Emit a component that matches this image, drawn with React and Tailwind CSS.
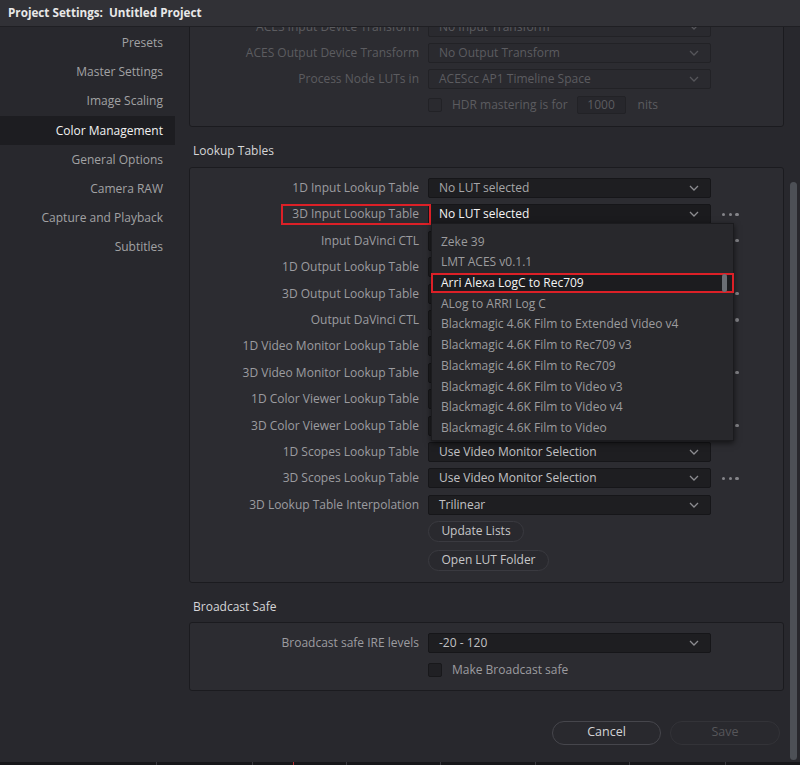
import React from "react";

const Chevron = ({ color = "#8c8c90" }) => (
  <svg width="10" height="6" viewBox="0 0 10 6" className="shrink-0">
    <path d="M1 1 L5 5 L9 1" fill="none" stroke={color} strokeWidth="1.3" />
  </svg>
);

const Dots = () => (
  <div className="flex items-center gap-[3.4px] ml-[11px]">
    <span className="w-[3.3px] h-[3.3px] rounded-full bg-[#85858a]" />
    <span className="w-[3.3px] h-[3.3px] rounded-full bg-[#85858a]" />
    <span className="w-[3.3px] h-[3.3px] rounded-full bg-[#85858a]" />
  </div>
);

const lutRows = [
  { label: "1D Input Lookup Table", value: "No LUT selected", color: "#a6a6a8" },
  { label: "3D Input Lookup Table", value: "No LUT selected", color: "#f4f4f4", dots: true, active: true },
  { label: "Input DaVinci CTL", value: "No CTL selected", dots: true },
  { label: "1D Output Lookup Table", value: "No LUT selected" },
  { label: "3D Output Lookup Table", value: "No LUT selected", dots: true },
  { label: "Output DaVinci CTL", value: "No CTL selected", dots: true },
  { label: "1D Video Monitor Lookup Table", value: "No LUT selected" },
  { label: "3D Video Monitor Lookup Table", value: "No LUT selected", dots: true },
  { label: "1D Color Viewer Lookup Table", value: "No LUT selected" },
  { label: "3D Color Viewer Lookup Table", value: "No LUT selected", dots: true },
  { label: "1D Scopes Lookup Table", value: "Use Video Monitor Selection" },
  { label: "3D Scopes Lookup Table", value: "Use Video Monitor Selection", dots: true },
  { label: "3D Lookup Table Interpolation", value: "Trilinear" },
];

const popupItems = [
  "Zeke 39",
  "LMT ACES v0.1.1",
  "Arri Alexa LogC to Rec709",
  "ALog to ARRI Log C",
  "Blackmagic 4.6K Film to Extended Video v4",
  "Blackmagic 4.6K Film to Rec709 v3",
  "Blackmagic 4.6K Film to Rec709",
  "Blackmagic 4.6K Film to Video v3",
  "Blackmagic 4.6K Film to Video v4",
  "Blackmagic 4.6K Film to Video",
];

const sideItems = [
  "Presets",
  "Master Settings",
  "Image Scaling",
  "Color Management",
  "General Options",
  "Camera RAW",
  "Capture and Playback",
  "Subtitles",
];

function Popup() {
  return (
    <div className="absolute left-[2px] top-[18px] w-[303px] h-[218px] bg-[#28282c] border border-[#1b1b1e] shadow-[0_2px_6px_rgba(0,0,0,0.6)] z-10 pt-[7px]">
      {popupItems.map((t, i) =>
        i === 2 ? (
          <div
            key={t}
            className="h-[20.7px] -mx-[1px] flex items-center pl-[8px] bg-[#1c1c1f] border-2 border-[#dc2027] text-[#f4f4f4]"
          >
            {t}
          </div>
        ) : (
          <div key={t} className="h-[20.7px] flex items-center pl-[9px] text-[#9c9c9e]">
            {t}
          </div>
        )
      )}
      <div className="absolute right-[6px] top-[50px] w-[5px] h-[18px] rounded-full bg-[#6b6e74]" />
    </div>
  );
}

function Dropdown({ value, color = "#c2c2c4", active, bg = "#1e1e21", border = "#161619", chevron }) {
  return (
    <div
      className="relative w-[283px] h-[20px] rounded-[2px] border flex items-center justify-between pl-[10px] pr-[11px] shrink-0"
      style={{ background: bg, borderColor: border }}
    >
      <span style={{ color }}>{value}</span>
      <Chevron color={chevron} />
      {active && <Popup />}
    </div>
  );
}

export default function App() {
  return (
    <div className="w-[800px] h-[765px] bg-[#28282d] flex flex-col overflow-hidden font-['Open_Sans',sans-serif] text-[12px] leading-none">
      {/* Title bar */}
      <div className="h-[27px] shrink-0 bg-[#313136] border-b border-[#1f1f23] flex items-center pl-[8px] z-20 relative">
        <span className="whitespace-pre font-bold text-[11.7px] text-[#e8e8e8]">
          {"Project Settings:  Untitled Project"}
        </span>
      </div>

      <div className="flex flex-1 min-h-0">
        {/* Sidebar */}
        <div className="w-[175px] shrink-0 flex flex-col pt-[1.5px]">
          {sideItems.map((s) => (
            <div
              key={s}
              className={
                "h-[29.2px] flex items-center justify-end pr-[12px] " +
                (s === "Color Management" ? "bg-[#1d1d21] text-[#f2f2f2]" : "text-[#a2a2a4]")
              }
            >
              {s}
            </div>
          ))}
        </div>

        {/* Main */}
        <div className="flex-1 min-w-0 flex overflow-hidden">
          <div className="w-[595px] ml-[14px] shrink-0 flex flex-col">
            {/* ACES panel (scrolled, partially hidden) */}
            <div className="-mt-[22px] bg-[#2c2c31] border border-[#1b1b1f] rounded-[3px] pt-[11px] pb-[11px] flex flex-col gap-[6px]">
              {[
                ["ACES Input Device Transform", "No Input Transform"],
                ["ACES Output Device Transform", "No Output Transform"],
                ["Process Node LUTs in", "ACEScc AP1 Timeline Space"],
              ].map(([l, v]) => (
                <div key={l} className="h-[20px] flex items-center">
                  <div className="w-[229px] text-right text-[#5c5c60]">{l}</div>
                  <div className="ml-[9px]">
                    <Dropdown value={v} color="#5c5c60" bg="#2a2a2f" border="#222226" chevron="#55555a" />
                  </div>
                </div>
              ))}
              <div className="h-[20px] flex items-center">
                <div className="w-[229px]" />
                <div className="ml-[9px] w-[14px] h-[14px] rounded-[2px] bg-[#2a2a2f] border border-[#222226]" />
                <span className="ml-[10px] text-[#5c5c60]">HDR mastering is for</span>
                <div className="ml-[9px] w-[49px] h-[18px] rounded-[2px] bg-[#27272c] border border-[#222226] flex items-center justify-center text-[#5c5c60]">
                  1000
                </div>
                <span className="ml-[12px] text-[#5c5c60]">nits</span>
              </div>
            </div>

            {/* Lookup Tables */}
            <div className="mt-[14px] h-[20px] flex items-center pl-[4px] text-[12px] text-[#d6d6d8]">Lookup Tables</div>
            <div className="mt-[6px] bg-[#2c2c31] border border-[#1b1b1f] rounded-[3px] pt-[10px] pb-[11px] flex flex-col">
              <div className="flex flex-col gap-[6.4px]">
                {lutRows.map((r) => (
                  <div key={r.label} className={"relative h-[20px] flex items-center" + (r.active ? " z-10" : "")}>
                    <div className="w-[229px] text-right text-[#9c9ca0]">{r.label}</div>
                    <div className="ml-[9px]">
                      <Dropdown
                        value={r.value}
                        color={r.color}
                        active={r.active}
                        bg={r.active ? "#1b1b1e" : "#1e1e21"}
                      />
                    </div>
                    {r.dots && <Dots />}
                    {r.active && (
                      <div className="absolute left-[91px] top-0 w-[150px] h-[21px] border-2 border-[#dc2027] pointer-events-none" />
                    )}
                  </div>
                ))}
              </div>
              <div className="pl-[238px] mt-[6px] flex flex-col items-start gap-[8px]">
                <button className="h-[21px] w-[96px] rounded-full border border-[#3a3a40] bg-[#29292e] text-[#c6c6c8] text-[12px]">
                  Update Lists
                </button>
                <button className="h-[21px] w-[121px] rounded-full border border-[#3a3a40] bg-[#29292e] text-[#c6c6c8] text-[12px]">
                  Open LUT Folder
                </button>
              </div>
            </div>

            {/* Broadcast Safe */}
            <div className="mt-[14px] h-[20px] flex items-center pl-[4px] text-[12px] text-[#d6d6d8]">Broadcast Safe</div>
            <div className="mt-[5px] bg-[#2c2c31] border border-[#1b1b1f] rounded-[3px] pt-[10px] pb-[10px] flex flex-col gap-[7px]">
              <div className="h-[20px] flex items-center">
                <div className="w-[229px] text-right text-[#9c9ca0]">Broadcast safe IRE levels</div>
                <div className="ml-[9px]">
                  <Dropdown value="-20 - 120" />
                </div>
              </div>
              <div className="h-[20px] flex items-center">
                <div className="w-[229px]" />
                <div className="ml-[9px] w-[14px] h-[14px] rounded-[2px] bg-[#202024] border border-[#18181b]" />
                <span className="ml-[10px] text-[#9c9ca0]">Make Broadcast safe</span>
              </div>
            </div>

            {/* Footer buttons */}
            <div className="mt-[30px] flex justify-end gap-[9px] pr-[4px]">
              <button className="h-[24px] w-[109px] rounded-full border border-[#46464c] bg-[#29292e] text-[#d4d4d6] text-[12.5px]">
                Cancel
              </button>
              <button className="h-[24px] w-[110px] rounded-full border border-[#333338] bg-[#29292e] text-[#56565a] text-[12.5px]">
                Save
              </button>
            </div>
          </div>

          {/* Scrollbar */}
          <div className="ml-[6px] w-[7px] shrink-0 flex flex-col">
            <div className="mt-[155px] h-[578px] rounded-full bg-[#4d5056]" />
          </div>
        </div>
      </div>

      {/* Bottom strip */}
      <div className="h-[3px] shrink-0 bg-[#17171a] flex">
        <div className="w-[156px]" />
        <div className="w-[1px] bg-[#3a3a40]" />
        <div className="w-[95px]" />
        <div className="w-[1px] bg-[#3a3a40]" />
        <div className="w-[40px]" />
        <div className="w-[1px] bg-[#b03030]" />
        <div className="w-[52px]" />
        <div className="w-[1px] bg-[#3a3a40]" />
        <div className="w-[93px]" />
        <div className="w-[1px] bg-[#3a3a40]" />
        <div className="w-[94px]" />
        <div className="w-[1px] bg-[#3a3a40]" />
        <div className="w-[93px]" />
        <div className="w-[1px] bg-[#3a3a40]" />
        <div className="w-[95px]" />
        <div className="w-[1px] bg-[#3a3a40]" />
      </div>
    </div>
  );
}
